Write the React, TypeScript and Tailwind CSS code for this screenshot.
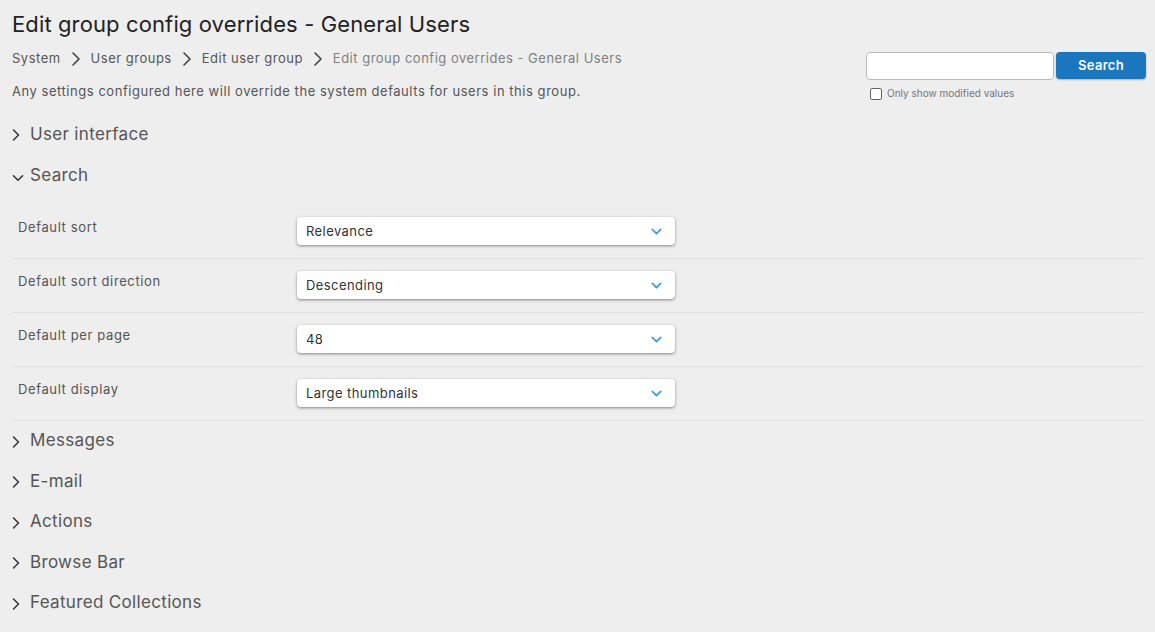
import React from 'react';
import { ChevronDown, ChevronRight } from 'lucide-react';

const rows = [
  { label: 'Default sort', value: 'Relevance' },
  { label: 'Default sort direction', value: 'Descending' },
  { label: 'Default per page', value: '48' },
  { label: 'Default display', value: 'Large thumbnails' },
];

const Crumb = ({ children }: { children: React.ReactNode }) => (
  <>
    <span className="text-[#555]">{children}</span>
    <ChevronRight size={24} strokeWidth={1.6} className="mx-[3px] text-[#444]" />
  </>
);

const Section = ({ title, open }: { title: string; open?: boolean }) => (
  <div className="flex h-[40.5px] items-center text-[#555]">
    <div className="flex w-[18px] justify-start">
      {open ? (
        <ChevronDown size={14} strokeWidth={2} className="mt-[5px] ml-[-1px] scale-[1.3] text-[#333]" />
      ) : (
        <ChevronRight size={20} strokeWidth={1.8} className="mt-[2px] -ml-[6px] text-[#333]" />
      )}
    </div>
    <span className="text-[17px] tracking-[0.33px]">{title}</span>
  </div>
);

export default function App() {
  return (
    <div className="h-[632px] w-[1155px] overflow-hidden bg-[#eeeeee] pl-3 pr-[13px] pt-[9px] font-['Inter',sans-serif]">
      <h1 className="h-[30px] text-[22px] leading-[30px] tracking-[0.12px] text-[#222]">
        Edit group config overrides - General Users
      </h1>

      <div className="flex items-start justify-between">
        <div>
          <div className="mt-[10px] flex h-5 items-center text-[13px] tracking-[0.5px]">
            <Crumb>System</Crumb>
            <Crumb>User groups</Crumb>
            <Crumb>Edit user group</Crumb>
            <span className="text-[#808080]">Edit group config overrides - General Users</span>
          </div>
          <p className="mt-[12px] text-[13px] leading-5 tracking-[0.54px] text-[#555]">
            Any settings configured here will override the system defaults for users in this group.
          </p>
        </div>

        <div className="mt-[13px] mr-[-4px] w-[280px]">
          <div className="flex items-start gap-[2px]">
            <input className="h-[28px] w-[188px] rounded-[4px] border border-[#bbbbbb] bg-white" />
            <button className="h-[27px] w-[90px] rounded-[4px] bg-[#1a76bd] text-[13px] font-semibold tracking-[0.3px] text-white shadow-[0_1px_2px_rgba(0,0,0,0.25)]">
              Search
            </button>
          </div>
          <label className="mt-[6px] ml-1 flex items-center gap-[5px] text-[10px] text-[#777]">
            <span className="h-3 w-3 rounded-[2px] border border-[#666] bg-white" />
            Only show modified values
          </label>
        </div>
      </div>

      <div className="mt-[13px]">
        <Section title="User interface" />
        <div className="pt-px">
          <Section title="Search" open />
        </div>
      </div>

      <div className="mt-[9px] mr-[-1px]">
        {rows.map((row) => (
          <div key={row.label} className="flex h-[54px] border-b border-[#e0e0e0] pl-[6px] pt-[12px]">
            <span className="w-[279px] text-[13px] leading-5 tracking-[0.62px] text-[#555]">{row.label}</span>
            <div className="flex h-[28px] w-[378px] items-center justify-between rounded-[4px] bg-white pl-[9px] pr-[10px] pt-px text-[13px] tracking-[0.42px] text-[#333] shadow-[0_1px_3px_rgba(0,0,0,0.45)]">
              {row.value}
              <ChevronDown size={17} strokeWidth={2.4} className="text-[#3f9be0]" />
            </div>
          </div>
        ))}
      </div>

      <div className="-mt-[0.5px]">
        <Section title="Messages" />
        <Section title="E-mail" />
        <Section title="Actions" />
        <Section title="Browse Bar" />
        <Section title="Featured Collections" />
      </div>
    </div>
  );
}
